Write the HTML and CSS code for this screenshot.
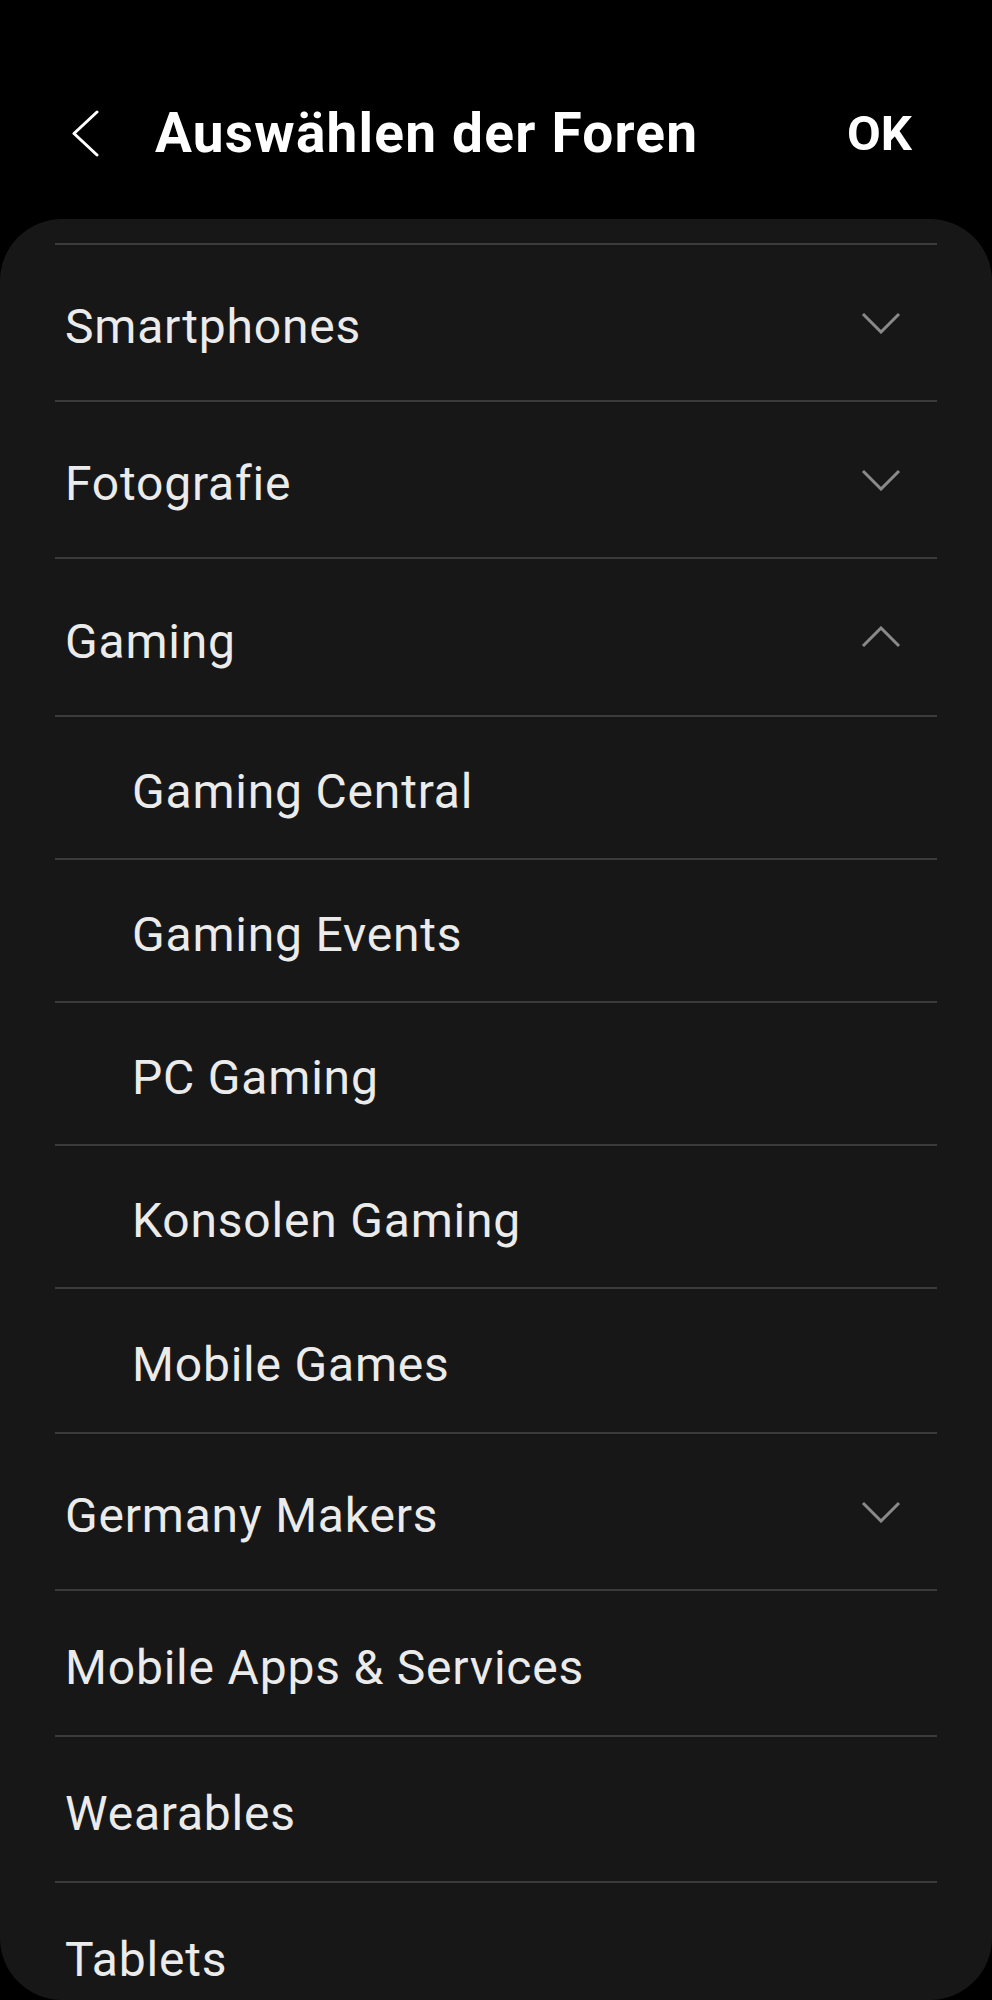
FILE: index.html
```html
<!DOCTYPE html>
<html lang="de">
<head>
<meta charset="utf-8">
<title>Auswählen der Foren</title>
<link rel="stylesheet" href="styles.css">
</head>
<body>
<div class="screen">
  <header class="appbar">
    <button class="back" aria-label="Zurück">
      <svg width="30" height="47" viewBox="0 0 30 47"><path d="M26 2 L3 23.5 L26 45" fill="none" stroke="#ffffff" stroke-width="3" stroke-linecap="round" stroke-linejoin="round"/></svg>
    </button>
    <h1 class="title">Auswählen der Foren</h1>
    <button class="ok">OK</button>
  </header>
  <main class="panel">
    <ul class="list">
      <li class="row row-main"><span class="label">Smartphones</span><svg class="chev" width="40" height="22" viewBox="0 0 40 22"><path d="M2 2 L20 20 L38 2" fill="none" stroke-width="3"/></svg></li>
      <li class="row row-main"><span class="label">Fotografie</span><svg class="chev" width="40" height="22" viewBox="0 0 40 22"><path d="M2 2 L20 20 L38 2" fill="none" stroke-width="3"/></svg></li>
      <li class="row row-main row-open"><span class="label">Gaming</span><svg class="chev" width="40" height="22" viewBox="0 0 40 22"><path d="M2 20 L20 2 L38 20" fill="none" stroke-width="3"/></svg></li>
      <li class="row row-sub"><span class="label">Gaming Central</span></li>
      <li class="row row-sub"><span class="label">Gaming Events</span></li>
      <li class="row row-sub"><span class="label">PC Gaming</span></li>
      <li class="row row-sub"><span class="label">Konsolen Gaming</span></li>
      <li class="row row-sub row-sub-last"><span class="label">Mobile Games</span></li>
      <li class="row row-main"><span class="label">Germany Makers</span><svg class="chev" width="40" height="22" viewBox="0 0 40 22"><path d="M2 2 L20 20 L38 2" fill="none" stroke-width="3"/></svg></li>
      <li class="row row-plain"><span class="label">Mobile Apps &amp; Services</span></li>
      <li class="row row-plain"><span class="label">Wearables</span></li>
      <li class="row row-plain"><span class="label">Tablets</span></li>
    </ul>
  </main>
</div>
</body>
</html>
```
FILE: styles.css
```css
* { box-sizing: border-box; }
html, body {
  margin: 0;
  padding: 0;
  background: #000;
}
body {
  font-family: Roboto, "Liberation Sans", sans-serif;
  color: #ebebeb;
}
.screen {
  width: 992px;
  height: 2000px;
  display: flex;
  flex-direction: column;
  overflow: hidden;
}
.appbar {
  height: 219px;
  flex: none;
  display: flex;
  align-items: center;
  padding: 48px 80px 0 71px;
}
.back {
  background: none;
  border: 0;
  padding: 0;
  width: 30px;
  height: 47px;
  display: flex;
  margin-right: 54px;
}
.title {
  margin: 0;
  flex: 1;
  font-size: 55px;
  font-weight: 700;
  color: #fff;
  letter-spacing: 1.2px;
  line-height: 1;
}
.ok {
  background: none;
  border: 0;
  padding: 0;
  font-family: Roboto, "Liberation Sans", sans-serif;
  font-size: 49px;
  font-weight: 700;
  color: #fff;
  line-height: 1;
}
.panel {
  flex: 1;
  background: #171717;
  border-radius: 62px;
  overflow: hidden;
  padding: 24px 55px 0;
}
.list {
  list-style: none;
  margin: 0;
  padding: 0;
}
.row {
  border-top: 2px solid #3b3b3b;
  display: flex;
  align-items: center;
  justify-content: space-between;
  padding: 0 36px 0 10px;
  font-size: 48px;
  letter-spacing: 0.8px;
  line-height: 1;
}
.row-main { height: 157px; }
.row-open { height: 158px; }
.row-plain { height: 146px; }
.row-sub { height: 143px; padding-left: 77px; }
.row-sub-last { height: 145px; }
.label { padding-top: 9px; }
.chev {
  flex: none;
  stroke: #8a8a8a;
}
```
